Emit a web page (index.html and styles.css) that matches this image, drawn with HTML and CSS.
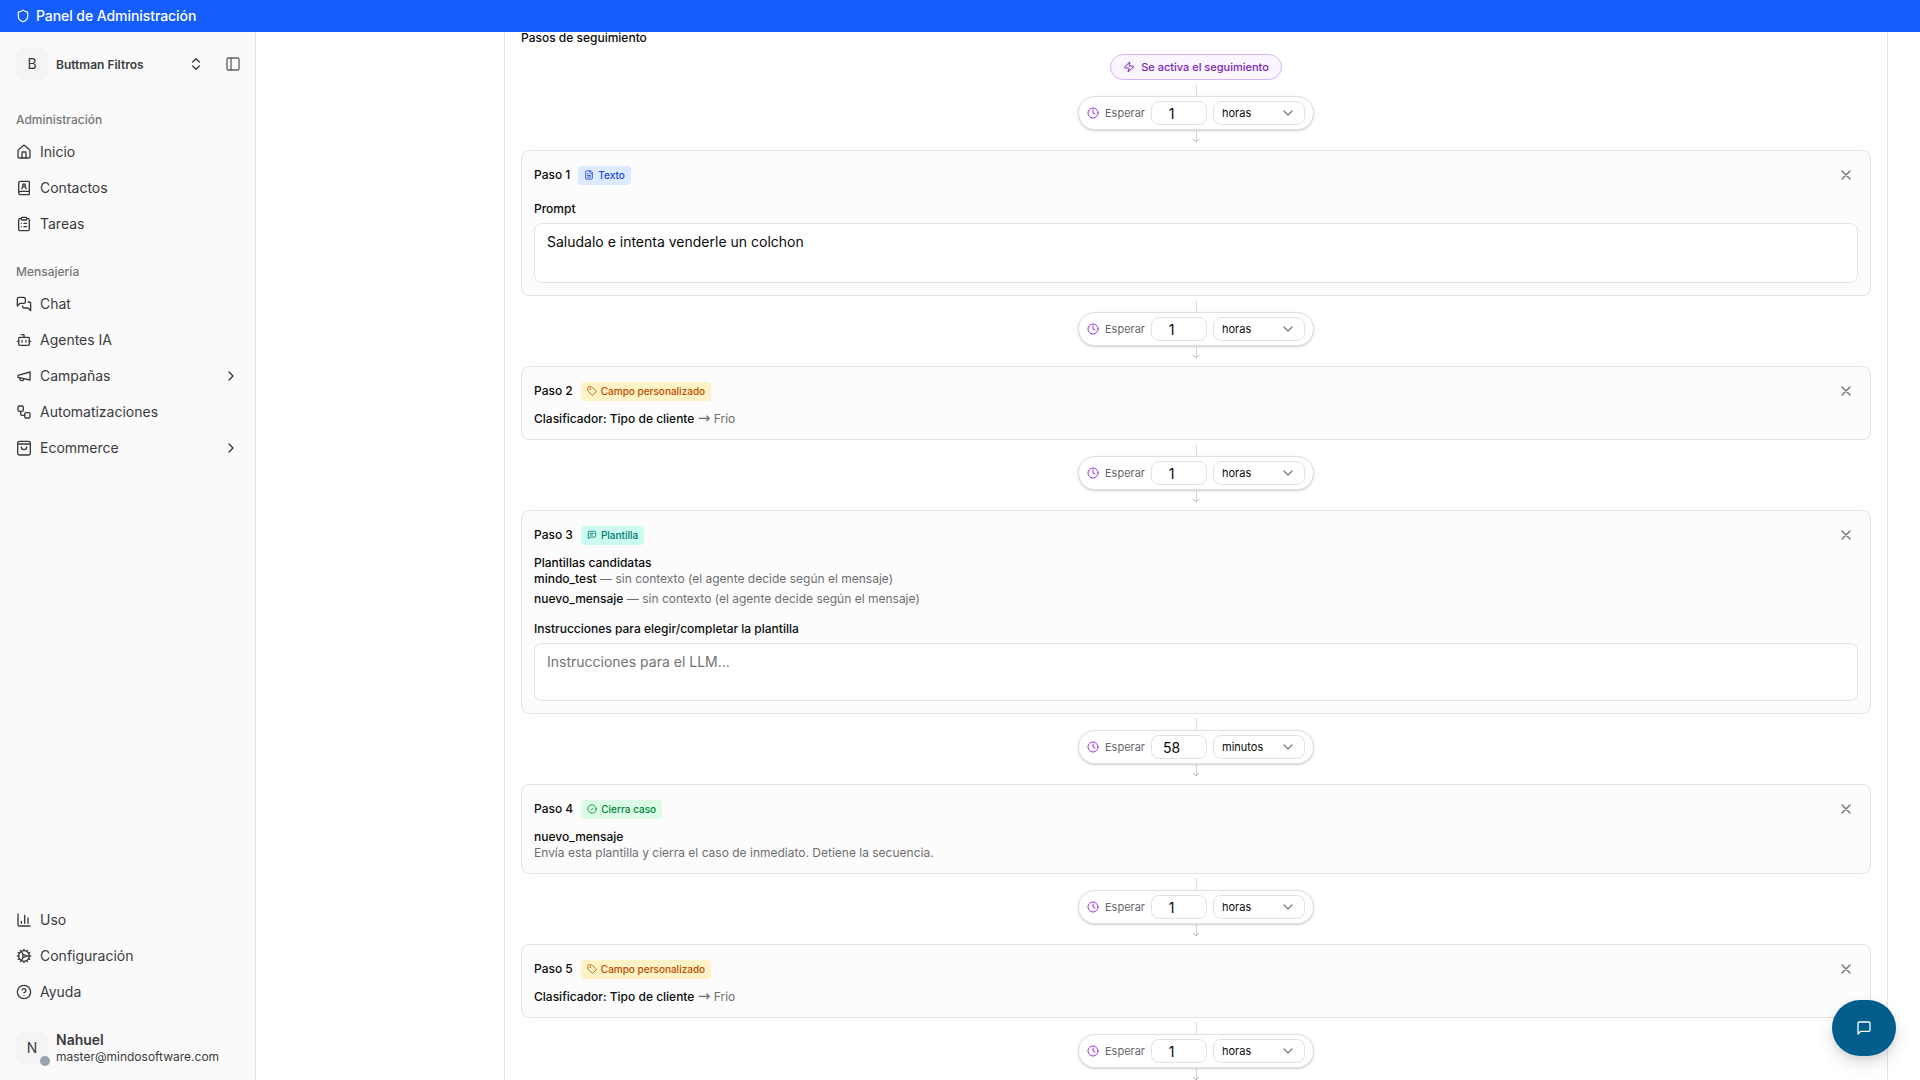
FILE: index.html
```html
<!DOCTYPE html>
<html lang="es">
<head>
  <meta charset="UTF-8">
  <meta name="viewport" content="width=device-width, initial-scale=1.0">
  <title>Panel de Administración</title>
  <link rel="stylesheet" href="styles.css">
</head>
<body>

  <!-- Iconos -->
  <svg class="sprite" xmlns="http://www.w3.org/2000/svg">
    <symbol id="shield" viewBox="0 0 24 24"><path d="M20 13c0 5-3.500 7.500-7.660 8.950a1 1 0 0 1-.67-.01C7.500 20.500 4 18 4 13V6a1 1 0 0 1 1-1c2 0 4.500-1.200 6.240-2.720a1.170 1.170 0 0 1 1.520 0C14.510 3.810 17 5 19 5a1 1 0 0 1 1 1z"/></symbol>
    <symbol id="updown" viewBox="0 0 24 24"><path d="m7 15 5 5 5-5M7 9l5-5 5 5"/></symbol>
    <symbol id="panel" viewBox="0 0 24 24"><rect x="3" y="3" width="18" height="18" rx="2"/><path d="M9 3v18"/></symbol>
    <symbol id="home" viewBox="0 0 24 24"><path d="M15 21v-8a1 1 0 0 0-1-1h-4a1 1 0 0 0-1 1v8"/><path d="M3 10a2 2 0 0 1 .709-1.528l7-5.999a2 2 0 0 1 2.582 0l7 5.999A2 2 0 0 1 21 10v9a2 2 0 0 1-2 2H5a2 2 0 0 1-2-2z"/></symbol>
    <symbol id="contact" viewBox="0 0 24 24"><path d="M15 13a3 3 0 1 0-6 0"/><path d="M4 19.500v-15A2.500 2.500 0 0 1 6.500 2H19a1 1 0 0 1 1 1v18a1 1 0 0 1-1 1H6.500a1 1 0 0 1 0-5H20"/><circle cx="12" cy="8" r="2"/></symbol>
    <symbol id="clipboard" viewBox="0 0 24 24"><rect x="8" y="2" width="8" height="4" rx="1"/><path d="M16 4h2a2 2 0 0 1 2 2v14a2 2 0 0 1-2 2H6a2 2 0 0 1-2-2V6a2 2 0 0 1 2-2h2M12 11h4M12 16h4M8 11h.01M8 16h.01"/></symbol>
    <symbol id="chats" viewBox="0 0 24 24"><path d="M14 9a2 2 0 0 1-2 2H6l-4 4V4a2 2 0 0 1 2-2h8a2 2 0 0 1 2 2z"/><path d="M18 9h2a2 2 0 0 1 2 2v11l-4-4h-6a2 2 0 0 1-2-2v-1"/></symbol>
    <symbol id="bot" viewBox="0 0 24 24"><path d="M12 8V4H8"/><rect x="4" y="8" width="16" height="12" rx="2"/><path d="M2 14h2M20 14h2M15 13v2M9 13v2"/></symbol>
    <symbol id="megaphone" viewBox="0 0 24 24"><path d="m3 11 18-5v12L3 14v-3z"/><path d="M11.600 16.800a3 3 0 1 1-5.800-1.600"/></symbol>
    <symbol id="workflow" viewBox="0 0 24 24"><rect x="3" y="3" width="8" height="8" rx="2"/><path d="M7 11v4a2 2 0 0 0 2 2h4"/><rect x="13" y="13" width="8" height="8" rx="2"/></symbol>
    <symbol id="bag" viewBox="0 0 24 24"><rect x="2.500" y="2" width="19" height="20.500" rx="2.500"/><path d="M3 6h18M16 10.500a4 4 0 0 1-8 0"/></symbol>
    <symbol id="right" viewBox="0 0 24 24"><path d="m9 18 6-6-6-6"/></symbol>
    <symbol id="down" viewBox="0 0 24 24"><path d="m6 9 6 6 6-6"/></symbol>
    <symbol id="chart" viewBox="0 0 24 24"><path d="M3 3v16a2 2 0 0 0 2 2h16M18 17V9M13 17V5M8 17v-3"/></symbol>
    <symbol id="cog" viewBox="0 0 24 24"><path d="M12 20a8 8 0 1 0 0-16 8 8 0 0 0 0 16Z"/><path d="M12 14a2 2 0 1 0 0-4 2 2 0 0 0 0 4ZM12 2v2M12 22v-2M17 20.660l-1-1.730M11 10.270 7 3.340M20.660 17l-1.730-1M3.340 7l1.730 1M14 12h8M2 12h2M20.660 7l-1.730 1M3.340 17l1.730-1M17 3.340l-1 1.730M11 13.730l-4 6.930"/></symbol>
    <symbol id="help" viewBox="0 0 24 24"><circle cx="12" cy="12" r="10"/><path d="M9.090 9a3 3 0 0 1 5.830 1c0 2-3 3-3 3M12 17h.01"/></symbol>
    <symbol id="zap" viewBox="0 0 24 24"><path d="M4 14a1 1 0 0 1-.78-1.630l9.900-10.200a.5.5 0 0 1 .86.460l-1.920 6.020A1 1 0 0 0 13 10h7a1 1 0 0 1 .78 1.630l-9.900 10.200a.5.5 0 0 1-.86-.46l1.920-6.020A1 1 0 0 0 11 14z"/></symbol>
    <symbol id="clock" viewBox="0 0 24 24"><circle cx="12" cy="12" r="10"/><path d="M12 6v6l4 2"/></symbol>
    <symbol id="file" viewBox="0 0 24 24"><path d="M15 2H6a2 2 0 0 0-2 2v16a2 2 0 0 0 2 2h12a2 2 0 0 0 2-2V7Z"/><path d="M14 2v4a2 2 0 0 0 2 2h4M10 9H8M16 13H8M16 17H8"/></symbol>
    <symbol id="tag" viewBox="0 0 24 24"><path d="M12.586 2.586A2 2 0 0 0 11.172 2H4a2 2 0 0 0-2 2v7.172a2 2 0 0 0 .586 1.414l8.704 8.704a2.426 2.426 0 0 0 3.420 0l6.580-6.580a2.426 2.426 0 0 0 0-3.420z"/><circle cx="7.500" cy="7.500" r=".5"/></symbol>
    <symbol id="template" viewBox="0 0 24 24"><path d="M21 15a2 2 0 0 1-2 2H7l-4 4V5a2 2 0 0 1 2-2h14a2 2 0 0 1 2 2zM13 12H7M17 8H7"/></symbol>
    <symbol id="check" viewBox="0 0 24 24"><circle cx="12" cy="12" r="10"/><path d="m9 12 2 2 4-4"/></symbol>
    <symbol id="close" viewBox="0 0 24 24"><path d="M18 6 6 18M6 6l12 12"/></symbol>
    <symbol id="message" viewBox="0 0 24 24"><path d="M21 15a2 2 0 0 1-2 2H7l-4 4V5a2 2 0 0 1 2-2h14a2 2 0 0 1 2 2z"/></symbol>
    <symbol id="arrow" viewBox="0 0 10 16"><path class="arrow-line" d="M5.500 0v11.500"/><path d="M2.300 9.100 5.200 12 8.100 9.100"/></symbol>
  </svg>

  <header class="topbar">
    <svg class="icon"><use href="#shield"/></svg>
    <span>Panel de Administración</span>
  </header>

  <div class="layout">
    <aside class="sidebar">
      <div class="team">
        <span class="avatar">B</span>
        <strong class="team-name">Buttman Filtros</strong>
        <svg class="icon"><use href="#updown"/></svg>
        <svg class="icon toggle"><use href="#panel"/></svg>
      </div>

      <nav class="group">
        <h2 class="group-title">Administración</h2>
        <a class="item"><svg class="icon"><use href="#home"/></svg><span>Inicio</span></a>
        <a class="item"><svg class="icon"><use href="#contact"/></svg><span>Contactos</span></a>
        <a class="item"><svg class="icon"><use href="#clipboard"/></svg><span>Tareas</span></a>
      </nav>

      <nav class="group">
        <h2 class="group-title">Mensajería</h2>
        <a class="item"><svg class="icon"><use href="#chats"/></svg><span>Chat</span></a>
        <a class="item"><svg class="icon"><use href="#bot"/></svg><span>Agentes IA</span></a>
        <a class="item"><svg class="icon"><use href="#megaphone"/></svg><span>Campañas</span><svg class="icon more"><use href="#right"/></svg></a>
        <a class="item"><svg class="icon"><use href="#workflow"/></svg><span>Automatizaciones</span></a>
        <a class="item"><svg class="icon"><use href="#bag"/></svg><span>Ecommerce</span><svg class="icon more"><use href="#right"/></svg></a>
      </nav>

      <nav class="group bottom">
        <a class="item"><svg class="icon"><use href="#chart"/></svg><span>Uso</span></a>
        <a class="item"><svg class="icon"><use href="#cog"/></svg><span>Configuración</span></a>
        <a class="item"><svg class="icon"><use href="#help"/></svg><span>Ayuda</span></a>
      </nav>

      <div class="user">
        <span class="avatar">N<i class="status"></i></span>
        <div class="user-info">
          <strong>Nahuel</strong>
          <span>master@mindosoftware.com</span>
        </div>
      </div>
    </aside>

    <main class="main">
      <section class="panel">
        <h3 class="panel-title">Pasos de seguimiento</h3>

        <div class="trigger"><svg class="icon"><use href="#zap"/></svg><span>Se activa el seguimiento</span></div>

        <div class="connector">
          <div class="wait"><svg class="icon"><use href="#clock"/></svg><span>Esperar</span><div class="amount">1</div><div class="unit"><span>horas</span><svg class="icon"><use href="#down"/></svg></div></div>
          <svg class="arrow"><use href="#arrow"/></svg>
        </div>

        <article class="step">
          <div class="step-head">
            <b>Paso 1</b>
            <span class="badge blue"><svg class="icon"><use href="#file"/></svg>Texto</span>
            <svg class="icon close"><use href="#close"/></svg>
          </div>
          <label class="field-label">Prompt</label>
          <div class="textbox tall">Saludalo e intenta venderle un colchon</div>
        </article>

        <div class="connector">
          <div class="wait"><svg class="icon"><use href="#clock"/></svg><span>Esperar</span><div class="amount">1</div><div class="unit"><span>horas</span><svg class="icon"><use href="#down"/></svg></div></div>
          <svg class="arrow"><use href="#arrow"/></svg>
        </div>

        <article class="step">
          <div class="step-head">
            <b>Paso 2</b>
            <span class="badge amber"><svg class="icon"><use href="#tag"/></svg>Campo personalizado</span>
            <svg class="icon close"><use href="#close"/></svg>
          </div>
          <div class="step-body">
            <p><b>Clasificador: Tipo de cliente</b> <span class="to">→</span> Frio</p>
          </div>
        </article>

        <div class="connector">
          <div class="wait"><svg class="icon"><use href="#clock"/></svg><span>Esperar</span><div class="amount">1</div><div class="unit"><span>horas</span><svg class="icon"><use href="#down"/></svg></div></div>
          <svg class="arrow"><use href="#arrow"/></svg>
        </div>

        <article class="step">
          <div class="step-head">
            <b>Paso 3</b>
            <span class="badge teal"><svg class="icon"><use href="#template"/></svg>Plantilla</span>
            <svg class="icon close"><use href="#close"/></svg>
          </div>
          <div class="step-body">
            <p><b>Plantillas candidatas</b></p>
            <p class="candidate"><b>mindo_test</b> — sin contexto (el agente decide según el mensaje)</p>
            <p><b>nuevo_mensaje</b> — sin contexto (el agente decide según el mensaje)</p>
          </div>
          <label class="field-label">Instrucciones para elegir/completar la plantilla</label>
          <div class="textbox placeholder">Instrucciones para el LLM...</div>
        </article>

        <div class="connector">
          <div class="wait"><svg class="icon"><use href="#clock"/></svg><span>Esperar</span><div class="amount">58</div><div class="unit"><span>minutos</span><svg class="icon"><use href="#down"/></svg></div></div>
          <svg class="arrow"><use href="#arrow"/></svg>
        </div>

        <article class="step">
          <div class="step-head">
            <b>Paso 4</b>
            <span class="badge green"><svg class="icon"><use href="#check"/></svg>Cierra caso</span>
            <svg class="icon close"><use href="#close"/></svg>
          </div>
          <div class="step-body">
            <p><b>nuevo_mensaje</b></p>
            <p>Envía esta plantilla y cierra el caso de inmediato. Detiene la secuencia.</p>
          </div>
        </article>

        <div class="connector">
          <div class="wait"><svg class="icon"><use href="#clock"/></svg><span>Esperar</span><div class="amount">1</div><div class="unit"><span>horas</span><svg class="icon"><use href="#down"/></svg></div></div>
          <svg class="arrow"><use href="#arrow"/></svg>
        </div>

        <article class="step">
          <div class="step-head">
            <b>Paso 5</b>
            <span class="badge amber"><svg class="icon"><use href="#tag"/></svg>Campo personalizado</span>
            <svg class="icon close"><use href="#close"/></svg>
          </div>
          <div class="step-body">
            <p><b>Clasificador: Tipo de cliente</b> <span class="to">→</span> Frio</p>
          </div>
        </article>

        <div class="connector">
          <div class="wait"><svg class="icon"><use href="#clock"/></svg><span>Esperar</span><div class="amount">1</div><div class="unit"><span>horas</span><svg class="icon"><use href="#down"/></svg></div></div>
          <svg class="arrow"><use href="#arrow"/></svg>
        </div>
      </section>
    </main>
  </div>

  <button class="chat-button" aria-label="Chat"><svg class="icon"><use href="#message"/></svg></button>

</body>
</html>
```
FILE: styles.css
```css
* {
  box-sizing: border-box;
}

body {
  margin: 0;
  height: 100vh;
  overflow: hidden;
  display: flex;
  flex-direction: column;
  font-family: Inter, sans-serif;
  font-size: 14px;
  line-height: 20px;
  color: #0a0a0a;
  background: #fff;
}

h2, h3, p {
  margin: 0;
}

b {
  font-weight: 500;
  color: #0a0a0a;
}

.sprite {
  display: none;
}

.icon {
  width: 16px;
  height: 16px;
  flex: none;
  fill: none;
  stroke: currentColor;
  stroke-width: 2;
  stroke-linecap: round;
  stroke-linejoin: round;
}

.topbar {
  flex: none;
  height: 32px;
  padding: 0 16px;
  display: flex;
  align-items: center;
  gap: 6px;
  background: #155dfc;
  color: #fff;
  font-weight: 500;
  letter-spacing: -0.07px;
}

.topbar .icon {
  width: 14px;
  height: 14px;
}

.layout {
  flex: 1;
  min-height: 0;
  display: flex;
}

/* Barra lateral */

.sidebar {
  width: 256px;
  flex: none;
  display: flex;
  flex-direction: column;
  padding: 16px 16px 16px;
  background: #fafafa;
  border-right: 1px solid #e2e2e2;
  color: #3a3a3e;
}

.team {
  display: flex;
  align-items: center;
  margin-bottom: 24px;
}

.avatar {
  position: relative;
  width: 32px;
  height: 32px;
  flex: none;
  display: flex;
  align-items: center;
  justify-content: center;
  border-radius: 8px;
  background: #f4f4f5;
}

.team-name {
  flex: 1;
  margin-left: 8px;
  padding-top: 1px;
  font-size: 12px;
  font-weight: 600;
}

.toggle {
  margin: 0 -2px 0 21px;
  color: #636366;
}

.group {
  margin-bottom: 12px;
}

.group-title {
  height: 32px;
  line-height: 32px;
  font-size: 12px;
  font-weight: 500;
  color: #757578;
}

.item {
  display: flex;
  align-items: center;
  gap: 8px;
  height: 32px;
  margin-bottom: 4px;
}

.more {
  margin-left: auto;
}

.bottom {
  margin-top: auto;
  margin-bottom: 19px;
}

.user {
  display: flex;
  align-items: center;
  gap: 8px;
}

.status {
  position: absolute;
  right: -2px;
  bottom: -2px;
  width: 10px;
  height: 10px;
  border-radius: 50%;
  background: #99a1af;
}

.user-info {
  display: flex;
  flex-direction: column;
  line-height: 17px;
}

.user-info strong {
  font-weight: 600;
}

.user-info span {
  padding-top: 1px;
  font-size: 12px;
  line-height: 15px;
}

/* Pasos */

.main {
  flex: 1;
  min-width: 0;
  padding: 0 32px 0 248px;
}

.panel {
  min-height: 100%;
  padding: 0 16px;
  border: 1px solid #e2e2e4;
  border-width: 0 1px;
}

.panel-title {
  height: 22px;
  line-height: 12px;
  font-size: 12px;
  font-weight: 500;
}

.trigger {
  width: fit-content;
  height: 26px;
  margin: 0 auto;
  padding: 0 12px;
  display: flex;
  align-items: center;
  gap: 6px;
  border: 1px solid #d6b4fa;
  border-radius: 13px;
  background: #faf5ff;
  color: #7a1fb8;
  font-size: 11px;
  font-weight: 500;
}

.trigger .icon,
.wait > .icon {
  width: 12px;
  height: 12px;
}

.connector {
  height: 70px;
  padding: 4px 0;
  display: flex;
  flex-direction: column;
  align-items: center;
}

.connector::before {
  content: "";
  width: 1px;
  height: 12px;
  margin-left: 1px;
  background: #dcdcde;
}

.wait {
  height: 34px;
  padding: 0 8px;
  display: flex;
  align-items: center;
  gap: 6px;
  flex: none;
  border: 1px solid #dfdfe1;
  border-radius: 17px;
  background: #fff;
  box-shadow: 0 1px 3px rgba(0, 0, 0, 0.1), 0 1px 2px rgba(0, 0, 0, 0.1);
  font-size: 11px;
}

.wait > span {
  color: #68686b;
}

.wait > .icon {
  color: #9333ea;
}

.amount,
.unit {
  height: 24px;
  display: flex;
  align-items: center;
  border: 1px solid #e2e2e4;
  border-radius: 8px;
}

.amount {
  width: 56px;
  justify-content: center;
  padding: 2px 15px 0 0;
  font-size: 14px;
}

.unit {
  width: 92px;
  justify-content: space-between;
  padding: 0 8px;
}

.unit .icon {
  color: #7d7d80;
}

.arrow {
  width: 10px;
  height: 16px;
  flex: none;
  fill: none;
  stroke: #b4b4b7;
  stroke-width: 1;
  stroke-linecap: round;
  stroke-linejoin: round;
}

.arrow-line {
  stroke: #d0d0d3;
}

.step {
  padding: 12px;
  border: 1px solid #e2e2e4;
  border-radius: 8px;
  background: #fcfcfc;
  font-size: 12px;
  line-height: 16px;
}

.step-head {
  display: flex;
  align-items: center;
  gap: 8px;
  height: 24px;
}

.badge {
  display: flex;
  align-items: center;
  gap: 4px;
  height: 19px;
  padding: 0 6px;
  border-radius: 4px;
  font-size: 10px;
  font-weight: 500;
}

.badge .icon {
  width: 10px;
  height: 10px;
}

.blue {
  background: #dbeafe;
  color: #1f48dc;
}

.amber {
  background: #fef3c6;
  color: #bb4d00;
}

.teal {
  background: #cbfbf1;
  color: #00786f;
}

.green {
  background: #dcfce7;
  color: #008236;
}

.close {
  margin: 0 4px 0 auto;
  color: #707073;
}

.step-body {
  margin-top: 8px;
  color: #6e6e71;
}

/* flecha más ancha, la de Inter es corta */
.to {
  font-family: "DejaVu Sans", sans-serif;
  font-size: 15px;
  line-height: 1;
}

.step-body p {
  height: 16px;
}

.candidate {
  margin-bottom: 4px;
}

.field-label {
  display: block;
  margin: 13px 0 5px;
  line-height: 18px;
  font-weight: 500;
}

.textbox {
  height: 58px;
  padding: 8px 12px;
  border: 1px solid #e2e2e4;
  border-radius: 8px;
  background: #fff;
  font-size: 14px;
  line-height: 20px;
}

.tall {
  height: 60px;
}

.placeholder {
  color: #737373;
}

.chat-button {
  position: fixed;
  right: 24px;
  bottom: 24px;
  width: 64px;
  height: 56px;
  display: flex;
  align-items: center;
  justify-content: center;
  border: 0;
  border-radius: 28px;
  background: #005d8c;
  color: #fff;
  box-shadow: 0 8px 16px rgba(0, 0, 0, 0.12), 0 3px 6px rgba(0, 0, 0, 0.08);
}
```
